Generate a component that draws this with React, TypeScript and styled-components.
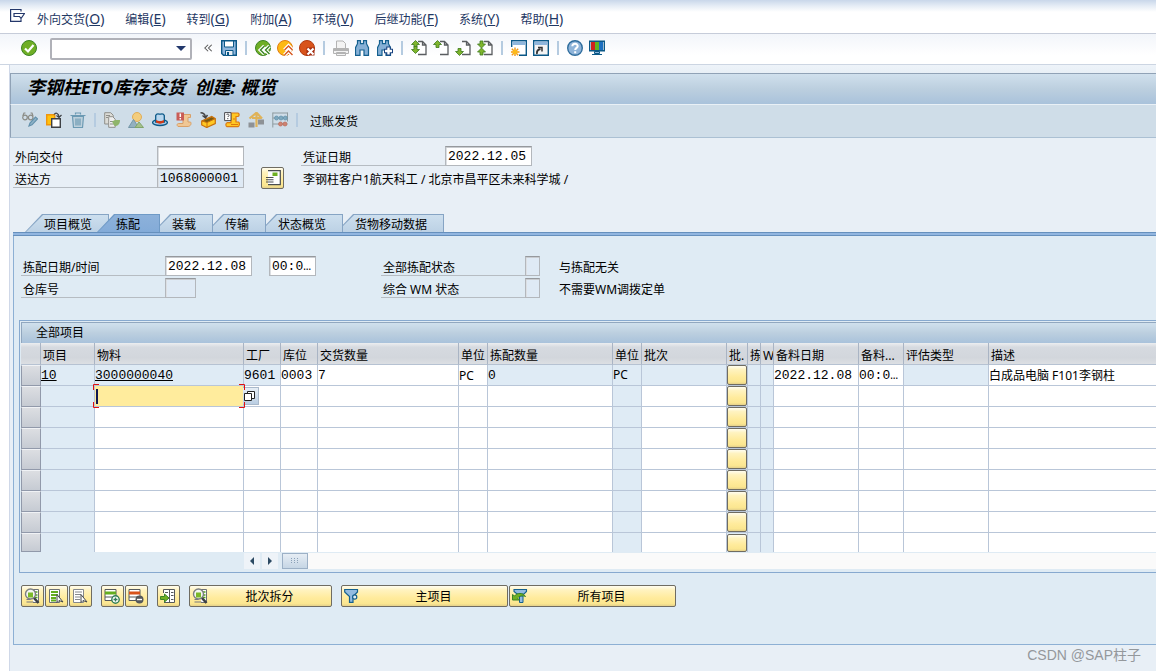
import React from "react";
import styled, { createGlobalStyle, css } from "styled-components";

const GlobalStyle = createGlobalStyle`
  *, *::before, *::after { box-sizing: border-box; }
  body {
    margin: 0;
    background: #fff;
    color: #000;
    font: 12px/16px "Noto Sans", "Noto Sans CJK SC", sans-serif;
  }
  button, input, select { font: inherit; color: inherit; margin: 0; }
`;

const mono = css`
  font-family: "Liberation Mono", "Noto Sans CJK SC", monospace;
  font-size: 13px;
`;

const yellowFace = css`
  background: linear-gradient(#fffdf0 0, #fff3c0 20%, #ffeb9c 60%, #fbe690 88%, #e4d08a 100%);
  border: 1px solid #6f6c62;
  border-radius: 2px;
`;

/* ---------- frame ---------- */

const Page = styled.div`
  min-height: 100vh;
  display: flex;
  flex-direction: column;
  overflow: hidden;
`;

const MenuBar = styled.nav`
  display: flex;
  align-items: center;
  gap: 12px;
  height: 34px;
  padding: 5px 10px 0;
  background: linear-gradient(#c9d7ea 0, #e6edf6 6px, #fff 12px);
  border-bottom: 1px solid #c6ccd9;
`;

const MenuGlyph = styled.span`
  display: flex;
  padding-bottom: 8px;
`;

const MenuList = styled.ul`
  display: flex;
  gap: 21px;
  margin: 0;
  padding: 0;
  list-style: none;
`;

const MenuLink = styled.a`
  color: #1f3864;
  text-decoration: none;
  white-space: nowrap;
`;

const Mnemonic = styled.span`
  font-size: 14px;
`;

const StandardBar = styled.div`
  display: flex;
  align-items: center;
  gap: 6px;
  height: 31px;
  padding: 0 21px 2px;
  background: linear-gradient(#f2f5fa, #fff 70%);
  border-bottom: 1px solid #ccd5e2;
`;

const CommandSelect = styled.select`
  width: 142px;
  height: 22px;
  padding: 0 16px 0 4px;
  appearance: none;
  border: 2px solid #b0b1b8;
  border-radius: 2px;
  background: #fff;
`;

const CommandField = styled.label`
  position: relative;
  display: flex;
  margin: 2px 4px 0 7px;
  &::after {
    content: "";
    position: absolute;
    right: 6px;
    top: 8px;
    border: 5px solid transparent;
    border-top-color: #22386c;
    border-bottom: 0;
    pointer-events: none;
  }
`;

const IconButton = styled.button`
  display: flex;
  flex: none;
  width: 16px;
  height: 16px;
  padding: 0;
  border: 0;
  background: none;
`;

const Chevron = styled(IconButton)`
  width: 13px;
  justify-content: center;
`;

const Divider = styled.span<{ $plain?: boolean }>`
  flex: none;
  width: 2px;
  height: 14px;
  margin: 0 ${(p) => (p.$plain ? 0 : 2)}px;
  background: #b5cbe0;
`;

const Shell = styled.main`
  flex: 1;
  margin-left: 9px;
  padding-top: 8px;
  border-left: 1px solid #cfd8e8;
  background: linear-gradient(#eef3f9 0, #e8eff6 8px);
`;

const TitleBar = styled.h1`
  margin: 0;
  height: 32px;
  padding: 0 16px;
  border: 1px solid #90a2b6;
  border-right: 0;
  border-bottom: 1px solid #e9f0f6;
  background: linear-gradient(#d0e0ed, #bccfdf 50%, #a9c2db);
  font: italic bold 18px/26px "Noto Sans", "Noto Sans CJK SC", sans-serif;
  white-space: pre;
`;

const AppBar = styled.div`
  display: flex;
  align-items: center;
  gap: 8px;
  height: 33px;
  padding: 0 11px 2px;
  border-left: 1px solid #90a2b6;
  border-bottom: 1px solid #abc0d3;
  background: #cfdde8;
`;

const TextButton = styled.button`
  padding: 4px 0 0 4px;
  border: 0;
  background: none;
`;

/* ---------- forms ---------- */

const HeadForm = styled.form`
  display: grid;
  grid-template-columns: 144px 87px 57px 144px 1fr;
  grid-auto-rows: 20px;
  row-gap: 2px;
  padding: 8px 3px 26px;
`;

const StatusForm = styled.form`
  display: grid;
  grid-template-columns: 144px 104px 112px 144px 34px 1fr;
  grid-auto-rows: 20px;
  row-gap: 2px;
  padding: 20px 7px 22px;
`;

const Label = styled.label`
  padding: 4px 2px 0;
  border-bottom: 1px solid #b6bcc2;
  line-height: 15px;
  white-space: nowrap;
`;

const Note = styled.span`
  padding-top: 4px;
  line-height: 15px;
  white-space: nowrap;
`;

const WideNote = styled(Note)`
  grid-column: 4 / 6;
  padding-left: 2px;
`;

const Field = styled.input<{ $w: number }>`
  ${mono}
  width: ${(p) => p.$w}px;
  height: 20px;
  padding: 0 2px;
  border: 1px solid #b3b7bc;
  border-top-color: #96999d;
  box-shadow: inset 0 1px #c9ccd0, inset 1px 0 #dcdfe3;
  background: #fff;
  outline: 0;
  &:read-only {
    background: #dfeaf5;
  }
`;

const DetailButton = styled.button`
  ${yellowFace}
  display: flex;
  align-items: center;
  justify-content: center;
  align-self: center;
  justify-self: center;
  width: 23px;
  height: 22px;
  padding: 0;
`;

/* ---------- tabs ---------- */

const TabList = styled.div`
  display: flex;
  padding-left: 15px;
`;

const Tab = styled.button<{ $active?: boolean; $z: number }>`
  position: relative;
  z-index: ${(p) => p.$z};
  height: 18px;
  margin-left: ${(p) => (p.$active ? -12 : -7)}px;
  padding: 4px ${(p) => (p.$active ? 20 : 17)}px 0 19px;
  border: 0;
  background: ${(p) => (p.$active ? "#6f9ac6" : "#86a4c4")};
  clip-path: polygon(0 100%, 17px 0, 100% 0, 100% 100%);
  line-height: 14px;
  white-space: nowrap;
  &:first-child {
    margin-left: 0;
  }
  &::before {
    content: "";
    position: absolute;
    inset: 1px 1px 0 1px;
    background: ${(p) =>
      p.$active ? "linear-gradient(#8db1da, #83abd8)" : "linear-gradient(#cddfee, #bcd1e5)"};
    clip-path: polygon(0 100%, 17px 0, 100% 0, 100% 100%);
  }
`;

const TabText = styled.span`
  position: relative;
`;

const Panel = styled.section`
  margin-left: 3px;
  border: 1px solid #8db0d4;
  border-right: 0;
  border-top: 0;
  padding-bottom: 37px;
  background: #dfebf4;
`;

const Band = styled.div`
  height: 4px;
  border: 1px solid #6690bd;
  border-width: 1px 0;
  background: #92b6e0;
  margin-left: 3px;
`;

/* ---------- table ---------- */

const Group = styled.div`
  margin-left: 5px;
  padding: 1px 0 2px 1px;
  border: 1px solid #87a9cf;
  border-right: 0;
`;

const GroupTitle = styled.h2`
  margin: 0;
  height: 21px;
  padding: 2px 14px;
  border: 1px solid #91a7bf;
  border-width: 1px 0 0 1px;
  background: linear-gradient(#d0e0ed, #bccfdf 50%, #a9c2db);
  font-size: 12px;
  font-weight: 400;
  line-height: 16px;
`;

const Grid = styled.table`
  width: 100%;
  table-layout: fixed;
  border-spacing: 0;
`;

const HeadCell = styled.th`
  height: 22px;
  padding: 4px 0 0 2px;
  overflow: hidden;
  border-right: 1px solid #a9b4c4;
  border-bottom: 1px solid #b6c2d2;
  background: linear-gradient(#eceef0, #d6dae0 20%, #d2d6dc 70%, #dcdfe3);
  font-weight: 400;
  text-align: left;
  white-space: nowrap;
  &:last-child {
    border-right: 0;
  }
`;

const Cell = styled.td<{ $blue?: boolean; $last?: boolean }>`
  position: relative;
  height: ${(p) => (p.$last ? 19 : 21)}px;
  padding: 0;
  border-right: 1px solid #b9c6d8;
  border-bottom: ${(p) => (p.$last ? 0 : 1)}px solid #b9c6d8;
  background: ${(p) => (p.$blue ? "#dfebf5" : "#fff")};
  line-height: 18px;
  white-space: nowrap;
  &:last-child {
    border-right: 0;
  }
`;

const RowSelector = styled.button<{ $last?: boolean }>`
  display: block;
  width: 20px;
  height: ${(p) => (p.$last ? 19 : 21)}px;
  margin-bottom: ${(p) => (p.$last ? 0 : -1)}px;
  padding: 0;
  border: 1px solid #9199aa;
  border-top-color: #f0f2f5;
  background: linear-gradient(#dcdee2, #c6cbd3);
`;

const CellInput = styled.input<{ $sans?: boolean; $focus?: boolean; $last?: boolean }>`
  ${mono}
  ${(p) => p.$sans && `font-family: "Noto Sans", "Noto Sans CJK SC", sans-serif; font-size: 12px;`}
  display: block;
  width: 100%;
  height: ${(p) => (p.$last ? 18 : 20)}px;
  padding: 0;
  border: 0;
  outline: 0;
  background: transparent;
  ${(p) => p.$focus && "background: linear-gradient(#101850, #101850) no-repeat 1px 3px / 2px 15px, #ffec9d;"}
`;

const CellLink = styled.a`
  ${mono}
  color: #000;
`;

const CellText = styled.span<{ $sans?: boolean }>`
  ${mono}
  ${(p) => p.$sans && `font-family: "Noto Sans", "Noto Sans CJK SC", sans-serif; font-size: 12px;`}
`;

const BatchButton = styled.button<{ $last?: boolean }>`
  ${yellowFace}
  display: block;
  width: 20px;
  height: ${(p) => (p.$last ? 18 : 20)}px;
  padding: 0;
`;

const FocusMarks = styled.svg`
  position: absolute;
  z-index: 2;
  left: -2px;
  top: -2px;
  pointer-events: none;
`;

const ValueHelp = styled.button`
  position: absolute;
  z-index: 1;
  left: 100%;
  top: 1px;
  display: flex;
  width: 16px;
  height: 18px;
  padding: 2px 0 0;
  border: 1px solid #a9b9cb;
  border-left: 0;
  background: linear-gradient(#e6eef6, #b9cde2);
`;

const ScrollRow = styled.div`
  display: flex;
  gap: 2px;
  height: 18px;
  padding-top: 1px;
  margin-left: 223px;
`;

const ScrollButton = styled.button`
  width: 16px;
  height: 16px;
  padding: 4px;
  border: 0;
  background: #eef3f8;
  display: flex;
`;

const ScrollTrack = styled.div`
  flex: 1;
  margin-left: 2px;
  height: 16px;
  background: #fafafa;
`;

const ScrollThumb = styled.div`
  display: flex;
  align-items: center;
  justify-content: center;
  width: 26px;
  height: 16px;
  border: 1px solid #9cb0c6;
  background: linear-gradient(#e6edf4, #c6d6e5);
`;

/* ---------- footer buttons ---------- */

const ActionRow = styled.div`
  display: flex;
  gap: 9px;
  padding: 12px 7px 0;
`;

const ActionGroup = styled.div`
  display: flex;
  gap: 1px;
`;

const ActionButton = styled.button<{ $w: number }>`
  ${yellowFace}
  display: flex;
  align-items: center;
  width: ${(p) => p.$w}px;
  height: 22px;
  padding: 0 2px;
`;

const ActionText = styled.span`
  flex: 1;
  padding: 2px 0 0 2px;
`;

const Watermark = styled.div`
  position: absolute;
  right: 15px;
  bottom: 6px;
  color: #94989c;
  font: 14px/20px "Liberation Sans", "Noto Sans CJK SC", sans-serif;
`;

/* ---------- icons ---------- */

const page = (
  <path d="M7 1.500h4.500l3.500 3.500v9.500H7M11.500 1.500V5H15" fill="#fff" stroke="#5a5d60" strokeWidth="1.300" />
);
const up = (x: number, y: number) => (
  <path d={`M${x} ${y}l4 4h-2.500v3h-3v-3h-2.500z`} fill="#7fb52c" stroke="#3c7a1c" strokeWidth=".8" />
);
const down = (x: number, y: number) => (
  <path d={`M${x} ${y}l4 -4h-2.500v-3h-3v3h-2.500z`} fill="#7fb52c" stroke="#3c7a1c" strokeWidth=".8" />
);
const binoculars = (
  <path
    d="M2.500 .7h3v3h3v-3h3v3l2 4v7.600h-4.500v-5.300h-4v5.300h-4.500v-7.600l2-4z"
    fill="#86b0d6"
    stroke="#14608f"
    strokeWidth="1.2"
  />
);
const lens = (
  <g>
    <path d="M9 1.500h5.500v13H9" fill="#fff" stroke="#6c7075" />
    <path d="M10 4h3.500M11 7h2.500M11 9.500h2.500" stroke="#57a51c" strokeWidth="1.500" />
    <circle cx="6.500" cy="6" r="5" fill="#f4f7f2" stroke="#7c7f82" strokeWidth="1.400" />
    <path d="M4 4.500h5v5H4z" fill="#7bb929" />
    <path d="M2.500 11.500h4M2.500 14h7" stroke="#77797d" />
    <path d="M10 10l4.500 5" stroke="#3d4043" strokeWidth="2.600" />
  </g>
);

const icons: Record<string, React.ReactNode> = {
  check: (
    <g>
      <circle cx="8" cy="8" r="7.500" fill="#6fae25" stroke="#3c8424" />
      <path d="M4 8.500l3 3 5.500-6.500" fill="none" stroke="#fff" strokeWidth="2.200" />
    </g>
  ),
  collapse: <path d="M7.500 4L3.500 8l4 4M12 4L8 8l4 4" fill="none" stroke="#555" strokeWidth="1.300" />,
  save: (
    <g>
      <path d="M.7.700h14.600v14.600H2.500L.7 13.500z" fill="#8fb6dc" stroke="#0b5887" strokeWidth="1.400" />
      <path d="M3.500 1h9v6h-9z" fill="#fff" stroke="#0b5887" />
      <path d="M4.500 10.500h7.500v5H4.500z" fill="#e8eef4" stroke="#0b5887" />
      <path d="M6 12h2v3H6z" fill="#0b5887" />
    </g>
  ),
  back: (
    <g>
      <circle cx="8" cy="8" r="7.500" fill="#6fae25" stroke="#3c8424" />
      <path d="M9.500 6L5.500 10l4 4M14.500 6l-4 4 4 4" fill="none" stroke="#fff" strokeWidth="3.800" />
      <path d="M9.500 6L5.500 10l4 4M14.500 6l-4 4 4 4" fill="none" stroke="#3c8424" strokeWidth="1.400" />
    </g>
  ),
  exit: (
    <g>
      <circle cx="8" cy="8" r="7.500" fill="#fdb913" stroke="#e07b12" />
      <path d="M7.500 10l4-4 4 4M7.500 15l4-4 4 4" fill="none" stroke="#fff" strokeWidth="3.800" />
      <path d="M7.500 10l4-4 4 4M7.500 15l4-4 4 4" fill="none" stroke="#d5551c" strokeWidth="1.400" />
    </g>
  ),
  cancel: (
    <g>
      <circle cx="8" cy="8" r="7.500" fill="#d8531b" stroke="#b03a10" />
      <path d="M7.500 7.500h8v8h-8z" fill="#a32c10" />
      <path d="M8.500 8.500l6 6M14.500 8.500l-6 6" stroke="#fff" strokeWidth="2.200" />
    </g>
  ),
  print: (
    <g stroke="#b3b3b3" fill="#f3f3f3">
      <path d="M3.500 8V1h6.500l2.500 2.500V8" />
      <path d="M.5 8.500h15v5H.5zM3.500 15.500h9v-3h-9z" />
      <path d="M1 10h14" strokeWidth="2" />
    </g>
  ),
  find: binoculars,
  findNext: (
    <g>
      {binoculars}
      <path d="M11.500 6.500v9M7 11h9" stroke="#17417f" strokeWidth="4.500" />
      <path d="M11.500 7.500v7M8 11h7" stroke="#fff" strokeWidth="2.400" />
    </g>
  ),
  first: <g>{page}{up(4.5, 0.5)}{down(4.5, 13.5)}</g>,
  previous: <g>{page}{up(4.5, 0.5)}</g>,
  next: <g>{page}{down(4.5, 15.5)}</g>,
  last: <g>{page}{down(4.5, 8)}{up(4.5, 8)}</g>,
  session: (
    <g>
      <path d="M.7.700h14.600v14.600H.7z" fill="#fff" stroke="#0b5887" strokeWidth="1.400" />
      <path d="M1.500 1.500h13v3.500h-13z" fill="#8fb6dc" />
      <path d="M0 7h8v9H0z" fill="#fff" />
      <path d="M4 7.500v9M-.5 12h9M.8 8.800l6.400 6.400M7.200 8.800L.8 15.200" stroke="#f39a12" strokeWidth="1.400" />
      <circle cx="4" cy="12" r="2.300" fill="#fdbb1a" />
    </g>
  ),
  shortcut: (
    <g>
      <path d="M.7.700h14.600v14.600H.7z" fill="#f4f4f4" stroke="#0b5887" strokeWidth="1.400" />
      <path d="M1.500 1.500h13v3.500h-13z" fill="#8fb6dc" />
      <path d="M4 14c-.5-3 1-4.500 3.500-5" fill="none" stroke="#333" strokeWidth="1.800" />
      <path d="M5 7.500h4v4" fill="none" stroke="#333" strokeWidth="1.500" />
    </g>
  ),
  help: (
    <g>
      <circle cx="8" cy="8" r="7.300" fill="#8fb4d9" stroke="#2f6d9d" strokeWidth="1.400" />
      <path d="M5.300 6.300c0-3.500 5.600-3.300 5.400 0-.1 1.600-2.400 1.600-2.500 3.700M8.200 11.300v2" fill="none" stroke="#fff" strokeWidth="2" />
    </g>
  ),
  layout: (
    <g>
      <path d="M.7 1.200h14.600v9.600H.7z" fill="#fff" stroke="#0b5887" strokeWidth="1.400" />
      <path d="M2 2h4v8H2z" fill="#d0201c" />
      <path d="M6 2h4v8H6z" fill="#5fb321" />
      <path d="M10 2h4v8h-4z" fill="#1c6fc0" />
      <path d="M5.500 11.500h5v2h-5zM3 14.500h10" fill="#8fb6dc" stroke="#0b5887" />
    </g>
  ),
  glasses: (
    <g fill="none" stroke="#8b8c86" strokeWidth="1.200">
      <circle cx="3" cy="5.500" r="2.300" />
      <circle cx="8.700" cy="5.500" r="2.300" />
      <path d="M.8 4L2 1h1.500M11 4L10 1H8.500M5.300 5h1.200" />
      <path d="M7 14l1-3 5.500-6 2 1.800L10 12.800z" fill="#8fb3c8" stroke="#6391ac" />
    </g>
  ),
  other: (
    <g>
      <path d="M.7 2.700h8v10h-8z" fill="#ffc20e" stroke="#f0950c" strokeWidth="1.400" />
      <path d="M5.700 6.700h8.600v8.600H5.700z" fill="#fff" stroke="#3e4145" strokeWidth="1.400" />
      <path d="M8 2.500c2-2.500 4.500-1 5 2M10.500 3.500l2.500 2 2.500-2.500" fill="none" stroke="#3e4145" strokeWidth="1.200" />
    </g>
  ),
  trash: (
    <g stroke="#6c9ab3" strokeWidth="1.200">
      <path d="M2.500 4.500h11l-1 11h-9z" fill="#bdd0dc" />
      <path d="M5.500 2.500v-1.500h5v1.500M.5 3.500h15" />
      <path d="M6 6.500v7M8 6.500v7M10 6.500v7" />
    </g>
  ),
  documents: (
    <g>
      <path d="M.7.700h6l2.500 2.500V12H.7z" fill="#dcdcd7" stroke="#8f8f8a" />
      <path d="M4.700 4.700h4l2.500 2.500v8.100H4.700z" fill="#eee" stroke="#8f8f8a" />
      <path d="M2 3.500h4M2 5.500h2M6 9.500h4M6 12h4" stroke="#8f8f8a" />
      <path d="M8 9.500l3-1.500h5c0 4-2 6-5.500 6z" fill="#8fb56b" />
    </g>
  ),
  overview: (
    <g>
      <circle cx="9" cy="5" r="4.500" fill="#f3cd7d" stroke="#e0ae58" />
      <path d="M.5 15.500l5-8 5 8z" fill="#93b0bf" stroke="#7497a8" />
      <path d="M7 15.500l4-5.500 4.500 5.500z" fill="#a5c08a" stroke="#80a56b" />
    </g>
  ),
  hat: (
    <g>
      <ellipse cx="8" cy="10.500" rx="7.400" ry="3" fill="#a8cbe8" stroke="#0b5887" strokeWidth="1.300" />
      <path d="M3.700 10V3.500c1-2.700 3.300-1.300 4.300-1.300s3.300-1.400 4.300 1.300V10z" fill="#b8d6ee" stroke="#0b5887" strokeWidth="1.300" />
      <path d="M4 8c2.500 1.500 5.500 1.500 8 0v2.500c-2.500 1.500-5.500 1.500-8 0z" fill="#d13a16" />
    </g>
  ),
  incomplete: (
    <g>
      <path d="M7 2.500h7.500v3H12v4.500h2.500c1.500 2-.5 4.500-2.500 4.500H2c-1.500-1-1-3 .5-3H7z" fill="#f0c795" stroke="#d9a068" />
      <path d="M.5.500H8v8H.5z" fill="#c95c57" />
      <path d="M4.300 1.500v3.500M4.300 6v1.500" stroke="#fff" strokeWidth="1.500" />
    </g>
  ),
  pack: (
    <g>
      <path d="M1.700 9l10-4.500 3.600 2v5l-8.600 4-5-2.500z" fill="#ffc824" stroke="#c8720e" strokeWidth="1.200" />
      <path d="M2 9l9.700-4 3.300 1.800L7 10.500z" fill="#7a5a10" stroke="#c8720e" />
      <path d="M7 10.500v5" stroke="#c8720e" />
      <path d="M.5.700c3 0 4.500 1 5 4.500M2.500 3.500l3 2.500 2-3" fill="none" stroke="#444" strokeWidth="1.400" />
    </g>
  ),
  output: (
    <g>
      <path d="M7 1h7c1.500.5 1.500 3 0 3.500H12V10h2.500c1.500 1 1 4-.5 4.700H3c-1.500-.7-1.500-3.500 0-4H7z" fill="#ffc824" stroke="#dc7a0f" strokeWidth="1.200" />
      <path d="M7 12.500h7M9 7h2" stroke="#dc7a0f" />
      <path d="M.6.600H7v8H.6z" fill="#fff" stroke="#4a4c50" />
      <path d="M2.500 3c.5-1.500 3-1 2.500.5L3.800 5M3.800 6v1.200" fill="none" stroke="#4a4c50" />
    </g>
  ),
  location: (
    <g>
      <path d="M1.500 6.500L8.500.7l5.500 5.800M8.500 1v14M4 6h9" fill="none" stroke="#dfb35a" strokeWidth="2.200" />
      <path d="M.5 10.500h6v5h-6zM10 7.500h6v5h-6z" fill="#8e9296" />
    </g>
  ),
  abacus: (
    <g>
      <path d="M.8.500v15M15.500.500v9M.8 1h14.700M.8 6h14.700M.8 12h14.700" fill="none" stroke="#8e9a9f" />
      <g fill="#7fa9bf" stroke="#5e8fa9" strokeWidth=".7">
        <circle cx="4.500" cy="6" r="2" />
        <circle cx="9" cy="6" r="2" />
        <circle cx="13.300" cy="6" r="2" />
      </g>
      <g fill="#cf8270" stroke="#b96a5a" strokeWidth=".7">
        <circle cx="8.500" cy="12" r="2" />
        <circle cx="13" cy="12" r="2" />
      </g>
    </g>
  ),
  detail: (
    <g>
      <path d="M3 .7h12.300v14H3" fill="#fff" stroke="#4a4d50" strokeWidth="1.200" />
      <path d="M7.500 2.500h5v3.500h-5z" fill="#6fb022" />
      <path d="M1 7.500h7.500M1 9.800h7.500M1 12h7.500" stroke="#4a4d50" strokeWidth="1.100" />
    </g>
  ),
  lens,
  selectAll: (
    <g>
      <path d="M1.500 1.500h10v13h-10z" fill="#fff" stroke="#6c7075" />
      <path d="M3 4h7M3 7h7M3 10h5M3 12.500h5" stroke="#64ad1f" strokeWidth="2" />
      <path d="M9 6.500v8l2-2 4 1.500z" fill="#fff" stroke="#44474a" />
    </g>
  ),
  deselect: (
    <g>
      <path d="M1.500 1.500h10v13h-10z" fill="#fff" stroke="#85888c" />
      <path d="M3 4h7M3 6.500h6M3 9h5M3 11.500h5" stroke="#85888c" />
      <path d="M9 6.500v8l2-2 4 1.500z" fill="#fff" stroke="#44474a" />
    </g>
  ),
  insertRow: (
    <g>
      <path d="M1 1.500h11v11H1zM1 9h11" fill="#fff" stroke="#55585b" />
      <path d="M1 5h11" stroke="#64ad1f" strokeWidth="3" />
      <circle cx="11.500" cy="11.500" r="3.700" fill="#fff" stroke="#2f7d55" strokeWidth="1.400" />
      <path d="M11.500 9.500v4M9.500 11.500h4" stroke="#2f7d55" strokeWidth="1.300" />
    </g>
  ),
  deleteRow: (
    <g>
      <path d="M1 1.500h11v11H1zM1 9h11" fill="#fff" stroke="#55585b" />
      <path d="M1 5h11" stroke="#d8531b" strokeWidth="3" />
      <circle cx="11.500" cy="11.500" r="4" fill="#55585b" />
      <path d="M9 11.500h5" stroke="#fff" strokeWidth="1.400" />
    </g>
  ),
  config: (
    <g>
      <path d="M3.500 5V1.500h11v13H4M9.500 2v12" fill="#fff" stroke="#55585b" />
      <path d="M5 4.500h3M11 4.500h2.500M11 7.500h2.500M11 11.500h2.500" stroke="#55585b" />
      <path d="M.5 8.500h4V6L9 10l-4.500 4v-2.500h-4z" fill="#6fb022" stroke="#3c8424" />
    </g>
  ),
  filter: (
    <g stroke="#14608f" strokeWidth="1.200">
      <path d="M.7 1.500h12.800V4L9 8.500v5.800H5.500V8.500L.7 4z" fill="#93bbe0" />
      <circle cx="10.700" cy="9" r="2.100" fill="#e6eef5" />
    </g>
  ),
  filterAll: (
    <g>
      <path d="M2 1.500h12.500v2L12 6H5L2 3.500z" fill="#93bbe0" stroke="#14608f" strokeWidth="1.100" />
      <path d="M7.500 8h3.500v6.500H7.500z" fill="#93bbe0" stroke="#14608f" />
      <path d="M.5 6.500l2 1.500C5 4.500 11 4.500 13.500 8.500 10 7 7.500 8 5.500 10l2 2H.5z" fill="#6fb022" stroke="#3c8424" />
    </g>
  ),
};

const Icon = ({ name }: { name: string }) => (
  <svg width="16" height="16" viewBox="0 0 16 16" fill="none" aria-hidden="true">
    {icons[name]}
  </svg>
);

/* ---------- data ---------- */

const menus: [string, string][] = [
  ["外向交货", "O"],
  ["编辑", "E"],
  ["转到", "G"],
  ["附加", "A"],
  ["环境", "V"],
  ["后继功能", "F"],
  ["系统", "Y"],
  ["帮助", "H"],
];

const standardTools = [
  "save", "|", "back", "exit", "cancel", "|", "print", "find", "findNext", "|",
  "first", "previous", "next", "last", "|", "session", "shortcut", "|", "help", "layout",
];

const appTools = [
  "glasses", "other", "trash", "|", "documents", "overview", "hat", "incomplete",
  "pack", "output", "location", "abacus", "|",
];

const tabs = ["项目概览", "拣配", "装载", "传输", "状态概览", "货物移动数据"];

type Kind = "link" | "text" | "input" | "button";
interface Column {
  title: string;
  width?: number;
  value: string;
  kind: Kind;
  sans?: boolean;
  blueFirst?: boolean;
  blueRest?: boolean;
}

const columns: Column[] = [
  { title: "项目", width: 54, value: "10", kind: "link", blueFirst: true, blueRest: true },
  { title: "物料", width: 149, value: "3000000040", kind: "link", blueFirst: true },
  { title: "工厂", width: 37, value: "9601", kind: "text", blueFirst: true },
  { title: "库位", width: 37, value: "0003", kind: "input" },
  { title: "交货数量", width: 141, value: "7", kind: "input" },
  { title: "单位", width: 29, value: "PC", kind: "input", sans: true },
  { title: "拣配数量", width: 125, value: "0", kind: "text", blueFirst: true },
  { title: "单位", width: 29, value: "PC", kind: "text", sans: true, blueFirst: true, blueRest: true },
  { title: "批次", width: 85, value: "", kind: "text", blueFirst: true },
  { title: "批.", width: 21, value: "", kind: "button", blueFirst: true, blueRest: true },
  { title: "拣", width: 13, value: "", kind: "text", blueFirst: true, blueRest: true },
  { title: "W", width: 13, value: "", kind: "text", blueFirst: true, blueRest: true },
  { title: "备料日期", width: 85, value: "2022.12.08", kind: "input" },
  { title: "备料...", width: 45, value: "00:0…", kind: "input" },
  { title: "评估类型", width: 85, value: "", kind: "text", blueFirst: true },
  { title: "描述", value: "白成品电脑 F101李钢柱", kind: "input", sans: true },
];

const rowCount = 9;

const renderTools = (tools: string[], plain?: boolean) =>
  tools.map((t, i) =>
    t === "|" ? (
      <Divider key={i} $plain={plain} />
    ) : (
      <IconButton key={i} type="button" aria-label={t}>
        <Icon name={t} />
      </IconButton>
    )
  );

function CellContent({ col, row }: { col: Column; row: number }) {
  const last = row === rowCount - 1;
  if (col.kind === "button") return <BatchButton type="button" $last={last} aria-label={`批次 ${row + 1}`} />;
  if (row === 0) {
    if (col.kind === "link") return <CellLink href="#item">{col.value}</CellLink>;
    if (col.kind === "text") return <CellText $sans={col.sans}>{col.value}</CellText>;
    return <CellInput $sans={col.sans} aria-label={col.title} defaultValue={col.value} />;
  }
  if (row === 1 && col.title === "物料") {
    return (
      <>
        <CellInput $focus aria-label="物料 2" />
        <FocusMarks width="152" height="24" viewBox="0 0 152 24" fill="none" stroke="#e01010">
          <path d="M.5 6V.5H6M146 .5h5.500V6M151.500 18v5.500H146M6 23.500H.5V18" />
        </FocusMarks>
        <ValueHelp type="button" aria-label="可能的输入">
          <svg width="14" height="13" viewBox="0 0 14 13" fill="#fff" stroke="#222">
            <path d="M4.500 1.500h7v7h-7z" />
            <path d="M1.500 3.500h7v7h-7z" />
          </svg>
        </ValueHelp>
      </>
    );
  }
  if (col.blueRest) return null;
  return <CellInput $last={last} aria-label={`${col.title} ${row + 1}`} />;
}

export default function App() {
  return (
    <Page>
      <GlobalStyle />
      <MenuBar>
        <MenuGlyph>
          <svg width="15" height="13" viewBox="0 0 15 13" fill="none" stroke="#24386b" strokeWidth="1.200">
            <path d="M11 2.500v-2H.6v11.800H11v-2" />
            <path d="M4 4.500h10.500L11 9.500 9.500 7.500H4z" fill="#fff" />
          </svg>
        </MenuGlyph>
        <MenuList>
          {menus.map(([name, key]) => (
            <li key={name}>
              <MenuLink href="#menu">
                {name}
                <Mnemonic>
                  (<u>{key}</u>)
                </Mnemonic>
              </MenuLink>
            </li>
          ))}
        </MenuList>
      </MenuBar>

      <StandardBar>
        <IconButton type="button" aria-label="check">
          <Icon name="check" />
        </IconButton>
        <CommandField>
          <CommandSelect aria-label="命令">
            <option></option>
          </CommandSelect>
        </CommandField>
        <Chevron type="button" aria-label="collapse">
          <Icon name="collapse" />
        </Chevron>
        {renderTools(standardTools)}
      </StandardBar>

      <Shell>
        <TitleBar>李钢柱ETO库存交货  创建: 概览</TitleBar>
        <AppBar>
          {renderTools(appTools, true)}
          <TextButton type="button">过账发货</TextButton>
        </AppBar>

        <HeadForm>
          <Label htmlFor="delivery">外向交付</Label>
          <Field id="delivery" $w={87} />
          <span />
          <Label htmlFor="docDate">凭证日期</Label>
          <Field id="docDate" $w={87} defaultValue="2022.12.05" />
          <Label htmlFor="shipTo">送达方</Label>
          <Field id="shipTo" $w={87} readOnly value="1068000001" />
          <DetailButton type="button" aria-label="detail">
            <Icon name="detail" />
          </DetailButton>
          <WideNote>李钢柱客户1航天科工 / 北京市昌平区未来科学城 /</WideNote>
        </HeadForm>

        <TabList role="tablist">
          {tabs.map((t, i) => (
            <Tab key={t} type="button" role="tab" aria-selected={i === 1} $active={i === 1} $z={i === 1 ? 10 : 8 - i}>
              <TabText>{t}</TabText>
            </Tab>
          ))}
        </TabList>
        <Band />

        <Panel>
          <StatusForm>
            <Label htmlFor="pickDate">拣配日期/时间</Label>
            <Field id="pickDate" $w={87} defaultValue="2022.12.08" />
            <Field aria-label="时间" $w={47} defaultValue="00:0…" />
            <Label htmlFor="pickStatus">全部拣配状态</Label>
            <Field id="pickStatus" $w={15} readOnly value="" />
            <Note>与拣配无关</Note>
            <Label htmlFor="warehouse">仓库号</Label>
            <Field id="warehouse" $w={31} readOnly value="" />
            <span />
            <Label htmlFor="wmStatus">综合 WM 状态</Label>
            <Field id="wmStatus" $w={15} readOnly value="" />
            <Note>不需要WM调拨定单</Note>
          </StatusForm>

          <Group>
            <GroupTitle>全部项目</GroupTitle>
            <Grid>
              <colgroup>
                <col style={{ width: 20 }} />
                {columns.map((c, i) => (
                  <col key={i} style={c.width ? { width: c.width } : undefined} />
                ))}
              </colgroup>
              <thead>
                <tr>
                  <HeadCell aria-label="选择" />
                  {columns.map((c, i) => (
                    <HeadCell key={i} scope="col">
                      {c.title}
                    </HeadCell>
                  ))}
                </tr>
              </thead>
              <tbody>
                {Array.from({ length: rowCount }, (_, r) => (
                  <tr key={r}>
                    <Cell $last={r === rowCount - 1}>
                      <RowSelector type="button" $last={r === rowCount - 1} aria-label={`选择行 ${r + 1}`} />
                    </Cell>
                    {columns.map((c, i) => (
                      <Cell key={i} $last={r === rowCount - 1} $blue={r === 0 ? c.blueFirst : c.blueRest}>
                        <CellContent col={c} row={r} />
                      </Cell>
                    ))}
                  </tr>
                ))}
              </tbody>
            </Grid>
            <ScrollRow>
              <ScrollButton type="button" aria-label="向左">
                <svg width="8" height="8" viewBox="0 0 8 8">
                  <path d="M6 0v8L2 4z" fill="#2c4a63" />
                </svg>
              </ScrollButton>
              <ScrollButton type="button" aria-label="向右">
                <svg width="8" height="8" viewBox="0 0 8 8">
                  <path d="M2 0v8l4-4z" fill="#2c4a63" />
                </svg>
              </ScrollButton>
              <ScrollTrack>
                <ScrollThumb>
                  <svg width="9" height="6" viewBox="0 0 9 6" stroke="#8ba1b8" strokeDasharray="1 2">
                    <path d="M0 .5h8M0 2.500h8M0 4.500h8" />
                  </svg>
                </ScrollThumb>
              </ScrollTrack>
            </ScrollRow>
          </Group>

          <ActionRow>
            <ActionGroup>
              {["lens", "selectAll", "deselect"].map((n) => (
                <ActionButton key={n} type="button" $w={23} aria-label={n}>
                  <Icon name={n} />
                </ActionButton>
              ))}
            </ActionGroup>
            <ActionGroup>
              {["insertRow", "deleteRow"].map((n) => (
                <ActionButton key={n} type="button" $w={23} aria-label={n}>
                  <Icon name={n} />
                </ActionButton>
              ))}
            </ActionGroup>
            <ActionButton type="button" $w={23} aria-label="config">
              <Icon name="config" />
            </ActionButton>
            <ActionButton type="button" $w={143}>
              <Icon name="lens" />
              <ActionText>批次拆分</ActionText>
            </ActionButton>
            <ActionGroup>
              <ActionButton type="button" $w={167}>
                <Icon name="filter" />
                <ActionText>主项目</ActionText>
              </ActionButton>
              <ActionButton type="button" $w={167}>
                <Icon name="filterAll" />
                <ActionText>所有项目</ActionText>
              </ActionButton>
            </ActionGroup>
          </ActionRow>
        </Panel>
      </Shell>
      <Watermark>CSDN @SAP柱子</Watermark>
    </Page>
  );
}
